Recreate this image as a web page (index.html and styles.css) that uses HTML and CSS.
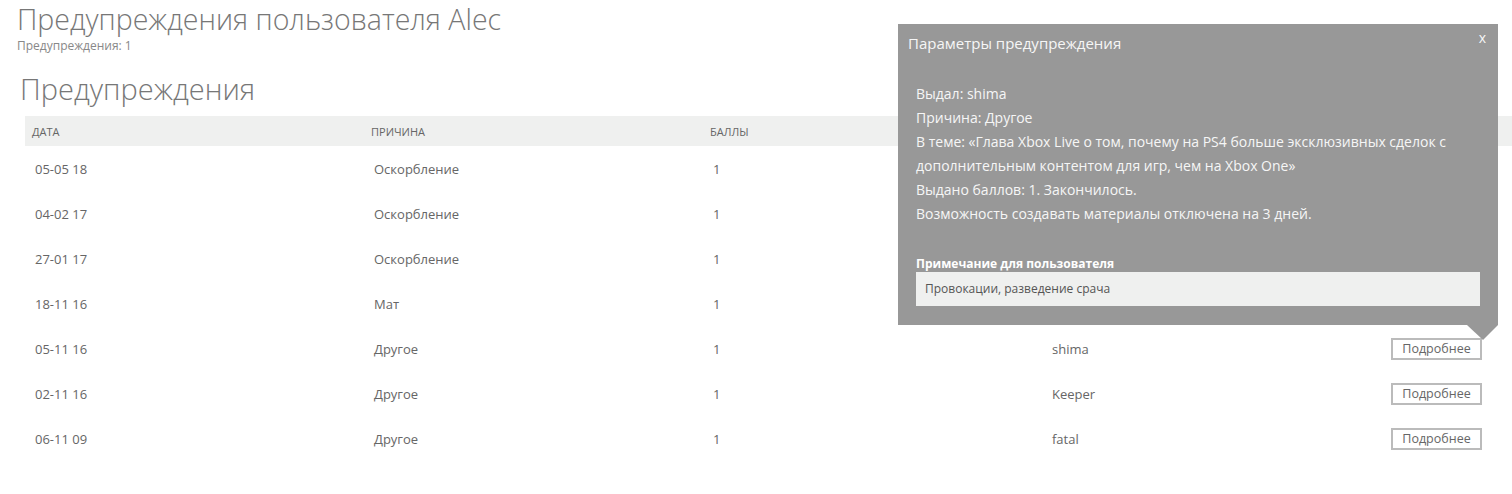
FILE: index.html
```html
<!DOCTYPE html>
<html lang="ru">
<head>
    <meta charset="UTF-8">
    <meta name="viewport" content="width=device-width, initial-scale=1.0">
    <title>Предупреждения пользователя Alec</title>
    <link rel="stylesheet" href="styles.css">
</head>
<body>
    <div class="page">
        <h1 class="title">Предупреждения пользователя Alec</h1>
        <div class="subtitle">Предупреждения: 1</div>
        <h2 class="section">Предупреждения</h2>
        <div class="warnings">
            <div class="row head">
                <span>Дата</span>
                <span>Причина</span>
                <span>Баллы</span>
                <span></span>
                <span></span>
            </div>
            <!-- rows under the open popup: moderator and button are covered -->
            <div class="row">
                <span>05-05 18</span><span>Оскорбление</span><span>1</span><span></span><span></span>
            </div>
            <div class="row">
                <span>04-02 17</span><span>Оскорбление</span><span>1</span><span></span><span></span>
            </div>
            <div class="row">
                <span>27-01 17</span><span>Оскорбление</span><span>1</span><span></span><span></span>
            </div>
            <div class="row">
                <span>18-11 16</span><span>Мат</span><span>1</span><span></span><span></span>
            </div>
            <div class="row">
                <span>05-11 16</span><span>Другое</span><span>1</span><span>shima</span>
                <span class="act"><a class="more">Подробнее</a></span>
            </div>
            <div class="row">
                <span>02-11 16</span><span>Другое</span><span>1</span><span>Keeper</span>
                <span class="act"><a class="more">Подробнее</a></span>
            </div>
            <div class="row">
                <span>06-11 09</span><span>Другое</span><span>1</span><span>fatal</span>
                <span class="act"><a class="more">Подробнее</a></span>
            </div>
        </div>
    </div>

    <div class="popup">
        <div class="popup-head">
            <span>Параметры предупреждения</span>
            <span class="close">x</span>
        </div>
        <div class="popup-body">
            <p>Выдал: shima</p>
            <p>Причина: Другое</p>
            <p>В теме: «Глава Xbox Live о том, почему на PS4 больше эксклюзивных сделок с дополнительным контентом для игр, чем на Xbox One»</p>
            <p>Выдано баллов: 1. Закончилось.</p>
            <p>Возможность создавать материалы отключена на 3 дней.</p>
        </div>
        <div class="note-label">Примечание для пользователя</div>
        <div class="note">Провокации, разведение срача</div>
    </div>
</body>
</html>
```

FILE: styles.css
```css
*{
    margin: 0;
    padding: 0;
    box-sizing: border-box;
}
body{
    font-family: "Open Sans", "Noto Sans", sans-serif;
    color: #666;
    background-color: #fff;
}
.page{
    padding: 1px 0 0 17px;
}
.title{
    font-size: 28.5px;
    font-weight: 300;
    line-height: 36px;
    color: #777;
}
.subtitle{
    font-size: 12px;
    line-height: 18px;
    color: #888;
}
.section{
    font-size: 29px;
    font-weight: 300;
    line-height: 36px;
    color: #777;
    margin: 16px 0 9px 3px;
}
.warnings{
    margin-left: 8px;
}
.row{
    display: grid;
    grid-template-columns: 339px 339px 339px 339px 1fr;
    align-items: center;
    height: 45px;
    font-size: 13px;
}
.row span{
    padding-left: 10px;
}
.row.head{
    height: 30px;
    background-color: #eff0ef;
    font-size: 11px;
    text-transform: uppercase;
    color: #666;
}
.row.head span{
    padding-left: 7px;
}
.row span.act{
    display: flex;
    justify-content: flex-end;
    padding-right: 30px;
}
.more{
    display: inline-block;
    width: 91px;
    height: 22px;
    line-height: 18px;
    text-align: center;
    border: 2px solid #bbb;
    font-size: 12.5px;
    color: #666;
    cursor: pointer;
}

.popup{
    position: absolute;
    left: 898px;
    top: 24px;
    width: 600px;
    height: 301px;
    background-color: #989898;
    color: #f6f6f6;
    padding: 0 18px 0 18px;
}
.popup::after{
    content: "";
    position: absolute;
    right: 0;
    bottom: -15px;
    border-top: 15px solid #989898;
    border-left: 16px solid transparent;
    border-right: 15px solid transparent;
}
.popup-head{
    display: flex;
    justify-content: space-between;
    height: 40px;
    padding: 9px 0 0 0;
    margin-left: -8px;
    font-size: 15px;
}
.close{
    font-size: 14px;
    margin-top: -5px;
    margin-right: -6px;
}
.popup-body{
    padding-top: 18px;
    font-size: 14px;
    line-height: 24px;
}
.note-label{
    margin-top: 30px;
    font-size: 12px;
    font-weight: bold;
    line-height: 16px;
    color: #fff;
}
.note{
    width: 564px;
    height: 34px;
    line-height: 34px;
    padding-left: 9px;
    background-color: #eff0ef;
    color: #555;
    font-size: 12px;
}
```
